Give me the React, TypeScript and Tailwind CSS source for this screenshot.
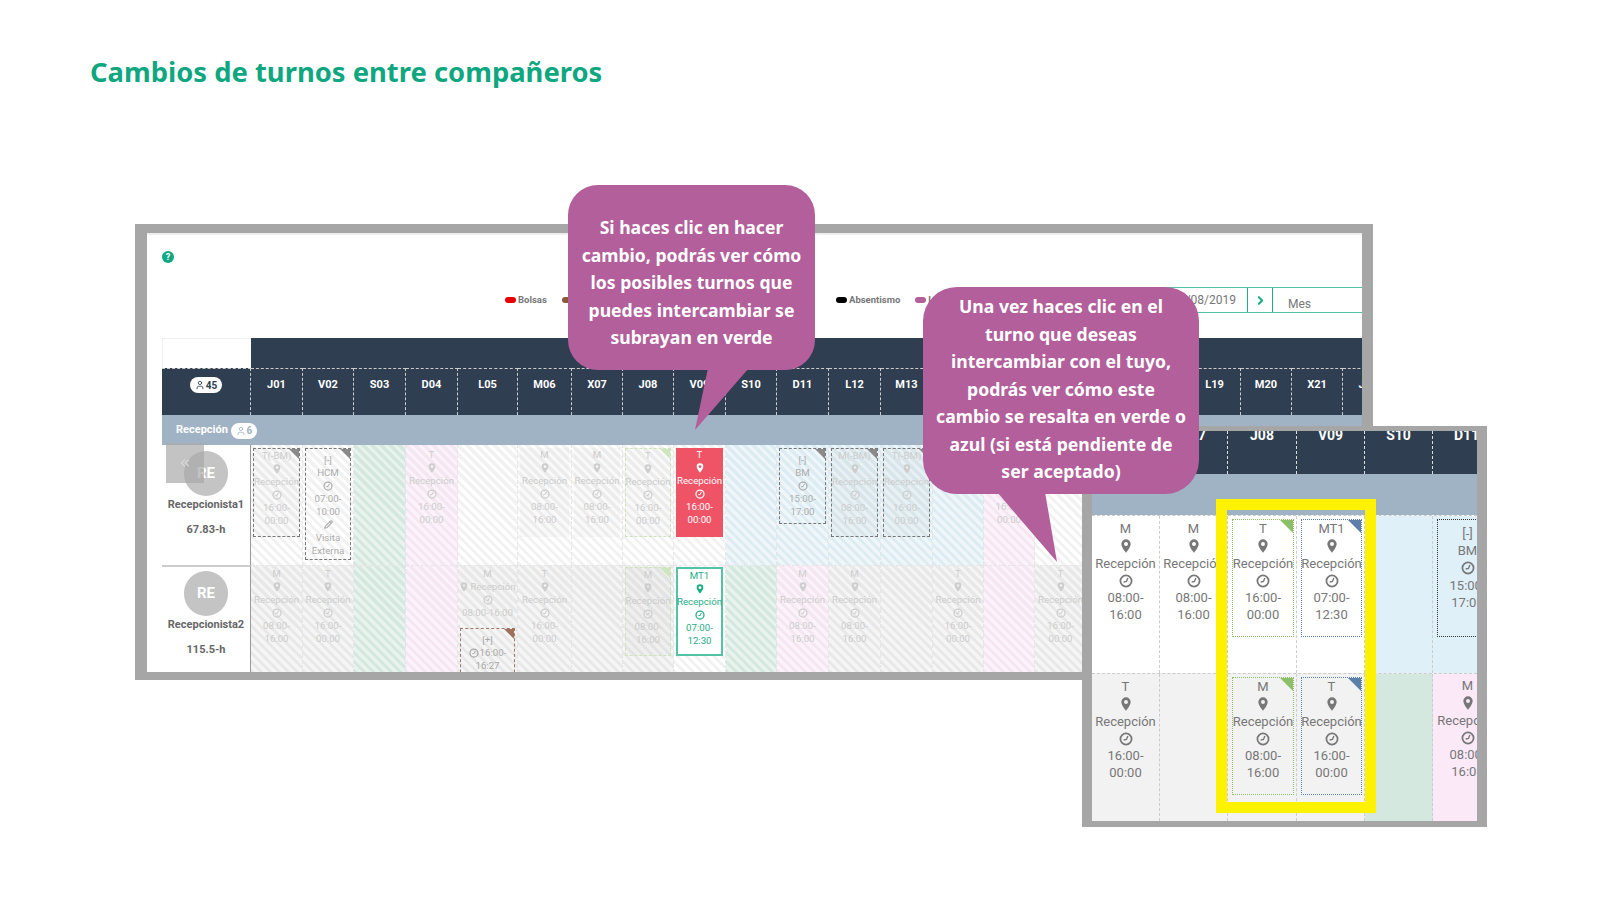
import { Pencil, User, ChevronRight, ChevronsLeft } from "lucide-react";
import type { ReactNode } from "react";

const DAYS = ["J01","V02","S03","D04","L05","M06","X07","J08","V09","S10","D11","L12","M13","X14","J15","V16","S17","D18","L19","M20","X21","J22"];
const COLS = "grid-cols-[89px_52px_51px_52px_52px_60px_54px_51px_51px_52px_51px_52px_52px_52px_51px_51px_52px_51px_51px_52px_51px_51px_51px]";
const ZOOM_COLS = "grid-cols-[68px_68px_69px_68px_68px_68px]";

const hatch = {
  white: "bg-[repeating-linear-gradient(45deg,#f2f2f2_0,#f2f2f2_3.2px,#fff_3.2px,#fff_6.4px)]",
  gray: "bg-[repeating-linear-gradient(45deg,#e8e8e8_0,#e8e8e8_3.2px,#f5f5f5_3.2px,#f5f5f5_6.4px)]",
  green: "bg-[repeating-linear-gradient(45deg,#d5e8e0_0,#d5e8e0_3.2px,#e9f3ee_3.2px,#e9f3ee_6.4px)]",
  pink: "bg-[repeating-linear-gradient(45deg,#f5e7f2_0,#f5e7f2_3.2px,#fbf3f9_3.2px,#fbf3f9_6.4px)]",
  blue: "bg-[repeating-linear-gradient(45deg,#ddebf2_0,#ddebf2_3.2px,#eff6fa_3.2px,#eff6fa_6.4px)]",
};
type Tone = keyof typeof hatch;

type Shift = {
  lines: string[];
  tone: Tone;
  kind?: "plain" | "dark" | "green" | "red" | "mint" | "split";
  pencil?: string[];
};

const s = (code: string, place: string, a: string, b: string) => [code, place, a, b];
const ROW1: Shift[] = [
  { tone: "white", kind: "dark", lines: s("T(-BM)", "Recepción", "16:00-", "00:00") },
  { tone: "white", kind: "split", lines: ["[-]", "HCM", "07:00-", "10:00"], pencil: ["Visita", "Externa"] },
  { tone: "green", lines: [] },
  { tone: "pink", lines: s("T", "Recepción", "16:00-", "00:00") },
  { tone: "white", lines: [] },
  { tone: "white", kind: "plain", lines: s("M", "Recepción", "08:00-", "16:00") },
  { tone: "white", kind: "plain", lines: s("M", "Recepción", "08:00-", "16:00") },
  { tone: "white", kind: "green", lines: s("T", "Recepción", "16:00-", "00:00") },
  { tone: "white", kind: "red", lines: s("T", "Recepción", "16:00-", "00:00") },
  { tone: "blue", lines: [] },
  { tone: "blue", kind: "split", lines: ["[-]", "BM", "15:00-", "17:00"] },
  { tone: "blue", kind: "dark", lines: s("M(-BM)", "Recepción", "08:00-", "16:00") },
  { tone: "blue", kind: "dark", lines: s("T(-BM)", "Recepción", "16:00-", "00:00") },
  { tone: "blue", lines: [] },
  { tone: "pink", lines: s("T", "Recepción", "16:00-", "00:00") },
  { tone: "white", lines: [] },
];
const ROW2: Shift[] = [
  { tone: "gray", lines: s("M", "Recepción", "08:00-", "16:00") },
  { tone: "gray", lines: s("T", "Recepción", "16:00-", "00:00") },
  { tone: "green", lines: [] },
  { tone: "pink", lines: [] },
  { tone: "gray", lines: [] }, // L05 va aparte, ver WideCell
  { tone: "gray", lines: s("T", "Recepción", "16:00-", "00:00") },
  { tone: "gray", lines: [] },
  { tone: "gray", kind: "green", lines: s("M", "Recepción", "08:00-", "16:00") },
  { tone: "white", kind: "mint", lines: s("MT1", "Recepción", "07:00-", "12:30") },
  { tone: "green", lines: [] },
  { tone: "pink", lines: s("M", "Recepción", "08:00-", "16:00") },
  { tone: "gray", lines: s("M", "Recepción", "08:00-", "16:00") },
  { tone: "gray", lines: [] },
  { tone: "gray", lines: s("T", "Recepción", "16:00-", "00:00") },
  { tone: "pink", lines: [] },
  { tone: "gray", lines: s("T", "Recepción", "16:00-", "00:00") },
];

function PinIcon({ size, className }: { size: number; className?: string }) {
  return (
    <svg className={className} width={size} height={size} viewBox="0 0 12 12" fill="currentColor">
      <path
        fillRule="evenodd"
        d="M6 0.3a4 4 0 0 0-4 4C2 7.2 6 11.8 6 11.8s4-4.6 4-7.5a4 4 0 0 0-4-4zM6 2.6a1.7 1.7 0 1 1 0 3.4a1.7 1.7 0 0 1 0-3.4z"
      />
    </svg>
  );
}

function ClockIcon({ size, className }: { size: number; className?: string }) {
  return (
    <svg className={className} width={size} height={size} viewBox="0 0 12 12" fill="none" stroke="currentColor">
      <circle cx="6" cy="6" r="4.8" strokeWidth="1.5" />
      <polyline points="7.6,3.4 6.4,6.4 4,6.9" strokeWidth="1.2" />
    </svg>
  );
}

function Corner({ color, size = 10 }: { color: string; size?: number }) {
  return (
    <svg className="absolute top-0 right-0" width={size} height={size} viewBox="0 0 10 10">
      <polygon points="0,0 10,0 10,10" fill={color} />
    </svg>
  );
}

function ShiftLines({ shift, tint }: { shift: Shift; tint: string }) {
  const [code, place, a, b] = shift.lines;
  const isSplit = shift.kind === "split";
  return (
    <div className={`flex flex-col items-center text-center text-[9.7px] leading-[13px] ${tint} ${isSplit ? "pt-[4px]" : ""}`}>
      <span>{code}</span>
      {!isSplit && <PinIcon size={10} className="my-[1.5px]" />}
      <span className="whitespace-nowrap">{place}</span>
      <ClockIcon size={10} className="my-[1.5px]" />
      <span>{a}</span>
      <span>{b}</span>
      {shift.pencil && (
        <>
          <Pencil size={9} strokeWidth={3} className="my-[2px]" />
          {shift.pencil.map((l) => (
            <span key={l}>{l}</span>
          ))}
        </>
      )}
    </div>
  );
}

function Cell({ shift, second, children }: { shift: Shift; second?: boolean; children?: ReactNode }) {
  const kind = shift.kind;
  const card =
    kind === "red"
      ? "bg-[#ef5466]"
      : kind === "mint"
      ? "bg-white border-2 border-[#52c3a5]"
      : kind === "dark"
      ? "border border-dashed border-[#777] bg-[#8a8a8a]/5"
      : kind === "split"
      ? "border border-dashed border-[#777]"
      : kind === "green"
      ? "border border-dashed border-[#cde3bc] bg-[#8a8a8a]/5"
      : kind === "plain"
      ? "bg-[#8a8a8a]/5"
      : "";
  const tint =
    kind === "red"
      ? "text-white"
      : kind === "mint"
      ? "text-[#1fad87]"
      : kind === "split"
      ? "text-[#adadad]"
      : "text-[#cdcdcd]";
  const cardHeight = shift.pencil ? "h-[112px]" : shift.kind === "split" ? "h-[76px]" : "h-[89px]";
  return (
    <div
      className={`relative min-w-0 overflow-hidden border-r border-dashed border-[#e6e6e6] px-[2px] ${
        second ? "border-t pt-[1px]" : "pt-[3px]"
      } ${hatch[shift.tone]}`}
    >
      {shift.lines.length > 0 && (
        <div className={`relative ${cardHeight} ${card}`}>
          {(kind === "dark" || kind === "split") && <Corner color="#8a8a8a" />}
          {kind === "green" && <Corner color="#cfe5bd" />}
          <ShiftLines shift={shift} tint={tint} />
        </div>
      )}
      {children}
    </div>
  );
}

// L05 de la segunda fila: turno en línea y un extra de marrón debajo
function WideCell() {
  return (
    <div className={`relative min-w-0 overflow-hidden border-t border-r border-dashed border-[#e6e6e6] px-[2px] pt-[1px] ${hatch.gray}`}>
      <div className="flex flex-col items-center text-center text-[9.7px] leading-[13px] text-[#cdcdcd]">
        <span>M</span>
        <span className="flex items-center gap-[1px] whitespace-nowrap">
          <PinIcon size={10} />
          Recepción
        </span>
        <ClockIcon size={10} className="my-[1.5px]" />
        <span className="whitespace-nowrap">08:00-16:00</span>
      </div>
      <div className="relative mt-[9px] h-[60px] border border-dashed border-[#a07a68] pt-[4px] text-center text-[9.7px] leading-[13px] text-[#a8a8a8]">
        <Corner color="#a0705a" />
        <div>[+]</div>
        <div className="flex items-center justify-center gap-[1px]">
          <ClockIcon size={10} />
          16:00-
        </div>
        <div>16:27</div>
      </div>
    </div>
  );
}

function Employee({ name, hours, second }: { name: string; hours: string; second?: boolean }) {
  return (
    <div className={`relative flex flex-col items-center border-r border-[#999] bg-white ${second ? "border-t-2 border-t-[#ccc] pt-[4px]" : "pt-[6px]"}`}>
      <div className="flex h-[45px] w-[44px] shrink-0 items-center justify-center rounded-full bg-[#c4c4c4] text-[15px] font-bold text-white">RE</div>
      <div className="mt-[1px] text-[11px] leading-[16px] font-bold text-[#666]">{name}</div>
      <div className="mt-[9px] text-[11px] leading-[16px] font-bold text-[#666]">{hours}</div>
      {!second && (
        <div className="absolute top-[-2px] left-[4px] flex h-[40px] w-[38px] items-center justify-center bg-[#a9a9a9]/70 text-[#d9d9d9]">
          <ChevronsLeft size={14} />
        </div>
      )}
    </div>
  );
}

function Legend({ color, label }: { color: string; label: string }) {
  return (
    <span className="flex items-center gap-[2px] text-[9.5px] font-bold text-[#777]">
      <span className={`h-[6px] w-[11px] rounded-full ${color}`} />
      {label}
    </span>
  );
}

function Board() {
  return (
    <div className="ml-[135px] mt-[132px] h-[456px] w-[1238px] border-t-[9px] border-r-[11px] border-b-[8px] border-l-[12px] border-[#a6a6a6] bg-white">
      <div className="h-full overflow-hidden border-t-2 border-[#eee] font-['Roboto',sans-serif]">
        <div className="relative h-[103px]">
          <div className="absolute top-[16px] left-[15px] flex h-[12px] w-[12px] items-center justify-center rounded-full bg-[#13a884] text-[9px] leading-none font-bold text-white">?</div>
          <div className="absolute top-[58px] left-[358px] flex gap-[15px]">
            <Legend color="bg-[#e60000]" label="Bolsas" />
            <Legend color="bg-[#8b5a3c]" label="Festivos" />
          </div>
          <div className="absolute top-[58px] left-[689px] flex gap-[15px]">
            <Legend color="bg-black" label="Absentismo" />
            <Legend color="bg-[#b25f9b]" label="Libre" />
          </div>
          <div className="absolute top-[52px] right-0 flex h-[26px] w-[216px] border border-r-0 border-[#52c3a5] text-[12px] text-[#777]">
            <span className="flex w-[100px] items-center justify-end pr-[11px]">01/08/2019</span>
            <span className="flex w-[26px] items-center justify-center border-x border-[#1fad87] text-[#1fad87]">
              <ChevronRight size={13} strokeWidth={4} />
            </span>
            <span className="flex items-center pt-[7px] pl-[15px]">Mes</span>
          </div>
        </div>

        <div className="ml-[15px]">
          <div className="flex h-[30px]">
            <div className="w-[89px] border-t border-l border-[#f0f0f0]" />
            <div className="flex-1 bg-[#2f3e50]" />
          </div>
          <div className={`grid h-[47px] ${COLS} bg-[#2f3e50] text-[11px] font-bold text-white`}>
            <div className="flex justify-center border-t border-r border-dashed border-[#ccc] pt-[8px]">
              <span className="flex h-[16px] w-[32px] items-center justify-center gap-[1px] rounded-full bg-white text-[10px] text-[#2f3e50]">
                <User size={10} />45
              </span>
            </div>
            {DAYS.map((d) => (
              <div key={d} className="border-t border-r border-dashed border-[#ccc] pt-[8px] text-center">{d}</div>
            ))}
          </div>
          <div className="flex h-[30px] items-center gap-[3px] bg-[#a0b3c5] pt-[1px] pl-[14px] text-[11px] font-bold text-white">
            Recepción
            <span className="flex h-[16px] w-[26px] items-center justify-center gap-[1px] rounded-full bg-white text-[10px] text-[#a0b3c5]">
              <User size={10} />6
            </span>
          </div>

          <div className={`grid h-[120px] ${COLS}`}>
            <Employee name="Recepcionista1" hours="67.83-h" />
            {ROW1.map((c, i) => (
              <Cell key={i} shift={c} />
            ))}
          </div>
          <div className={`grid h-[108px] ${COLS}`}>
            <Employee name="Recepcionista2" hours="115.5-h" second />
            {ROW2.map((c, i) =>
              i === 4 ? <WideCell key={i} /> : <Cell key={i} shift={c} second />
            )}
          </div>
        </div>
      </div>
    </div>
  );
}

function ZoomShift({ code, label, a, b, frame, corner, noPin }: { code: string; label?: string; a: string; b: string; frame?: string; corner?: string; noPin?: boolean }) {
  const margin = frame ? "mr-[2px] ml-[4px]" : "mx-[2px]";
  const top = noPin ? "pt-[5px]" : frame ? "pt-0" : "pt-[1px]";
  return (
    <div className={`relative mt-[3px] h-[118px] ${margin} ${top} ${frame ?? ""}`}>
      {corner && <Corner color={corner} size={13} />}
      <div className="flex flex-col items-center text-center text-[13px] leading-[17.3px] text-[#777]">
        <span>{code}</span>
        {!noPin && <PinIcon size={14} className="my-[1.65px]" />}
        <span className="whitespace-nowrap">{label ?? "Recepción"}</span>
        <ClockIcon size={14} className="my-[1.65px]" />
        <span>{a}</span>
        <span>{b}</span>
      </div>
    </div>
  );
}

function ZoomInset() {
  const cell = "min-w-0 overflow-hidden border-r border-dashed border-[#ccc]";
  const greenFrame = "border border-dotted border-[#8cc068]";
  const blueFrame = "border border-dotted border-[#5b7fa8]";
  return (
    <div className="absolute top-[426px] left-[1082px] h-[401px] w-[405px] border-x-[10px] border-t-[5px] border-b-[6px] border-[#a6a6a6] font-['Roboto',sans-serif]">
      <div className="h-full w-full overflow-hidden">
        <div className={`grid h-[43px] ${ZOOM_COLS} bg-[#2f3e50] text-[14px] leading-[8px] font-bold text-white`}>
          {["M06", "X07", "J08", "V09", "S10", "D11"].map((d) => (
            <div key={d} className="overflow-hidden border-r border-dashed border-[#ddd] text-center">{d}</div>
          ))}
        </div>
        <div className="h-[41px] w-[405px] bg-[#a0b3c5]" />
        <div className={`grid h-[158px] ${ZOOM_COLS} border-t border-dashed border-[#ccc] bg-white`}>
          <div className={cell}><ZoomShift code="M" a="08:00-" b="16:00" /></div>
          <div className={cell}><ZoomShift code="M" a="08:00-" b="16:00" /></div>
          <div className={cell}><ZoomShift code="T" a="16:00-" b="00:00" frame={greenFrame} corner="#8cc068" /></div>
          <div className={cell}><ZoomShift code="MT1" a="07:00-" b="12:30" frame={blueFrame} corner="#5b7fa8" /></div>
          <div className={`${cell} bg-[#dff0f8]`} />
          <div className={`${cell} bg-[#dff0f8]`}>
            <ZoomShift noPin code="[-]" label="BM" a="15:00-" b="17:00" frame="border border-dotted border-[#333]" />
          </div>
        </div>
        <div className={`grid h-[148px] ${ZOOM_COLS} border-t border-dashed border-[#ccc] bg-[#f2f2f2]`}>
          <div className={cell}><ZoomShift code="T" a="16:00-" b="00:00" /></div>
          <div className={cell} />
          <div className={cell}><ZoomShift code="M" a="08:00-" b="16:00" frame={greenFrame} corner="#8cc068" /></div>
          <div className={cell}><ZoomShift code="T" a="16:00-" b="00:00" frame={blueFrame} corner="#5b7fa8" /></div>
          <div className={`${cell} bg-[#d4e8df]`} />
          <div className={`${cell} bg-[#fbe9f7]`}><ZoomShift code="M" a="08:00-" b="16:00" frame="border-0" /></div>
        </div>
      </div>
      {/* resaltado amarillo */}
      <div className="absolute top-[68px] left-[124px] h-[314px] w-[160px] border-[11px] border-[#fff200]" />
    </div>
  );
}

function Bubble({ lines, box, tail }: { lines: string[]; box: string; tail: { w: number; h: number; left: number; top: number; pts: string } }) {
  return (
    <div className={`absolute bg-[#b25f9b] text-center font-['Noto_Sans',sans-serif] text-[17.6px] leading-[27.5px] font-bold text-white ${box}`}>
      <svg
        className="absolute"
        style={{ left: tail.left, top: tail.top }}
        width={tail.w}
        height={tail.h}
        viewBox={`0 0 ${tail.w} ${tail.h}`}
      >
        <polygon points={tail.pts} fill="#b25f9b" />
      </svg>
      {lines.map((l) => (
        <div key={l}>{l}</div>
      ))}
    </div>
  );
}

export default function App() {
  return (
    <div className="relative h-[900px] w-[1600px] overflow-hidden bg-white">
      <h1 className="pt-[52px] pl-[90px] font-['Noto_Sans',sans-serif] text-[27.4px] leading-[40px] font-bold text-[#0fa77f]">
        Cambios de turnos entre compañeros
      </h1>
      <Board />
      <ZoomInset />
      <Bubble
        box="top-[185px] left-[568px] h-[185px] w-[247px] rounded-[30px] pt-[29px]"
        tail={{ w: 60, h: 64, left: 125, top: 183, pts: "15,0 56,0 2,62" }}
        lines={["Si haces clic en hacer", "cambio, podrás ver cómo", "los posibles turnos que", "puedes intercambiar se", "subrayan en verde"]}
      />
      <Bubble
        box="top-[287px] left-[923px] h-[207px] w-[276px] rounded-[34px] pt-[6px]"
        tail={{ w: 70, h: 72, left: 70, top: 205, pts: "4,0 52,0 64,70" }}
        lines={["Una vez haces clic en el", "turno que deseas", "intercambiar con el tuyo,", "podrás ver cómo este", "cambio se resalta en verde o", "azul (si está pendiente de", "ser aceptado)"]}
      />
    </div>
  );
}
